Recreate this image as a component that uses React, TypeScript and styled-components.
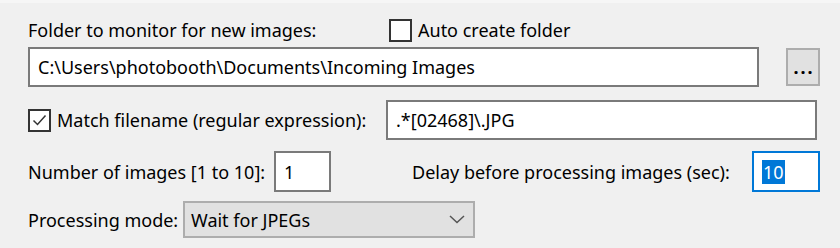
import React from "react";
import styled, { createGlobalStyle } from "styled-components";

const Global = createGlobalStyle`
  html, body {
    margin: 0;
    padding: 0;
    background: #f0f0f0;
  }
  body {
    font-family: "Noto Sans", "Open Sans", sans-serif;
  }
`;

const Panel = styled.div`
  width: 840px;
  height: 248px;
  box-sizing: border-box;
  background: #f0f0f0;
  border-top: 3px solid #f6f6f6;
  padding: 15px 0 0 28px;
  font-size: 18px;
  color: #000;
`;

const Row = styled.div<{ $top: number; $h: number }>`
  display: flex;
  align-items: center;
  height: ${(p) => p.$h}px;
  margin-top: ${(p) => p.$top}px;
`;

const Label = styled.span<{ $w?: number }>`
  white-space: nowrap;
  ${(p) => (p.$w ? `width: ${p.$w}px;` : "")}
`;

const Box = styled.span`
  width: 19px;
  height: 19px;
  border: 2px solid #333;
  background: #fff;
  display: inline-flex;
  align-items: center;
  justify-content: center;
  margin-right: 6px;
  flex-shrink: 0;
`;

const Check = styled.label`
  display: flex;
  align-items: center;
`;

const Field = styled.div<{ $w: number; $focus?: boolean }>`
  box-sizing: border-box;
  width: ${(p) => p.$w}px;
  height: 100%;
  background: #fff;
  border: 2px solid ${(p) => (p.$focus ? "#0078d7" : "#7a7a7a")};
  display: flex;
  align-items: center;
  padding-left: 8px;
  white-space: nowrap;
  overflow: hidden;
`;

const Selected = styled.span`
  background: #0078d7;
  color: #fff;
  padding: 0 1px;
`;

const Browse = styled.button`
  box-sizing: border-box;
  width: 34px;
  height: 38px;
  margin-left: 27px;
  background: #e1e1e1;
  border: 2px solid #adadad;
  font: inherit;
  font-weight: 700;
  letter-spacing: 2px;
  color: #000;
  display: flex;
  align-items: flex-end;
  justify-content: center;
  padding: 0 0 8px 2px;
  line-height: 1;
`;

const Combo = styled.div`
  box-sizing: border-box;
  width: 292px;
  height: 100%;
  margin-left: 8px;
  background: #e1e1e1;
  border: 2px solid #adadad;
  display: flex;
  align-items: center;
  justify-content: space-between;
  padding: 0 8px 0 6px;
`;

export default function App() {
  return (
    <>
      <Global />
      <Panel>
        <Row $top={0} $h={24}>
          <Label $w={361}>Folder to monitor for new images:</Label>
          <Check>
            <Box />
            <span>Auto create folder</span>
          </Check>
        </Row>
        <Row $top={5} $h={40}>
          <Field $w={731}>C:\Users\photobooth\Documents\Incoming Images</Field>
          <Browse>...</Browse>
        </Row>
        <Row $top={13} $h={40}>
          <Check>
            <Box>
              <svg width="17" height="17" viewBox="0 0 17 17">
                <path d="M2.5 8.5 L6.5 12.5 L14.5 3.5" fill="none" stroke="#333" strokeWidth="1.5" />
              </svg>
            </Box>
            <Label $w={329}>Match filename (regular expression):</Label>
          </Check>
          <Field $w={431}>.*[02468]\.JPG</Field>
        </Row>
        <Row $top={11} $h={41}>
          <Label $w={246}>Number of images [1 to 10]:</Label>
          <Field $w={57}>1</Field>
          <Label $w={340} style={{ marginLeft: 81 }}>
            Delay before processing images (sec):
          </Label>
          <Field $w={68} $focus>
            <Selected>10</Selected>
          </Field>
        </Row>
        <Row $top={9} $h={37}>
          <Label $w={147}>Processing mode:</Label>
          <Combo>
            <span>Wait for JPEGs</span>
            <svg width="16" height="9" viewBox="0 0 16 9">
              <path d="M1 1 L8 7.5 L15 1" fill="none" stroke="#555" strokeWidth="1.5" />
            </svg>
          </Combo>
        </Row>
      </Panel>
    </>
  );
}
